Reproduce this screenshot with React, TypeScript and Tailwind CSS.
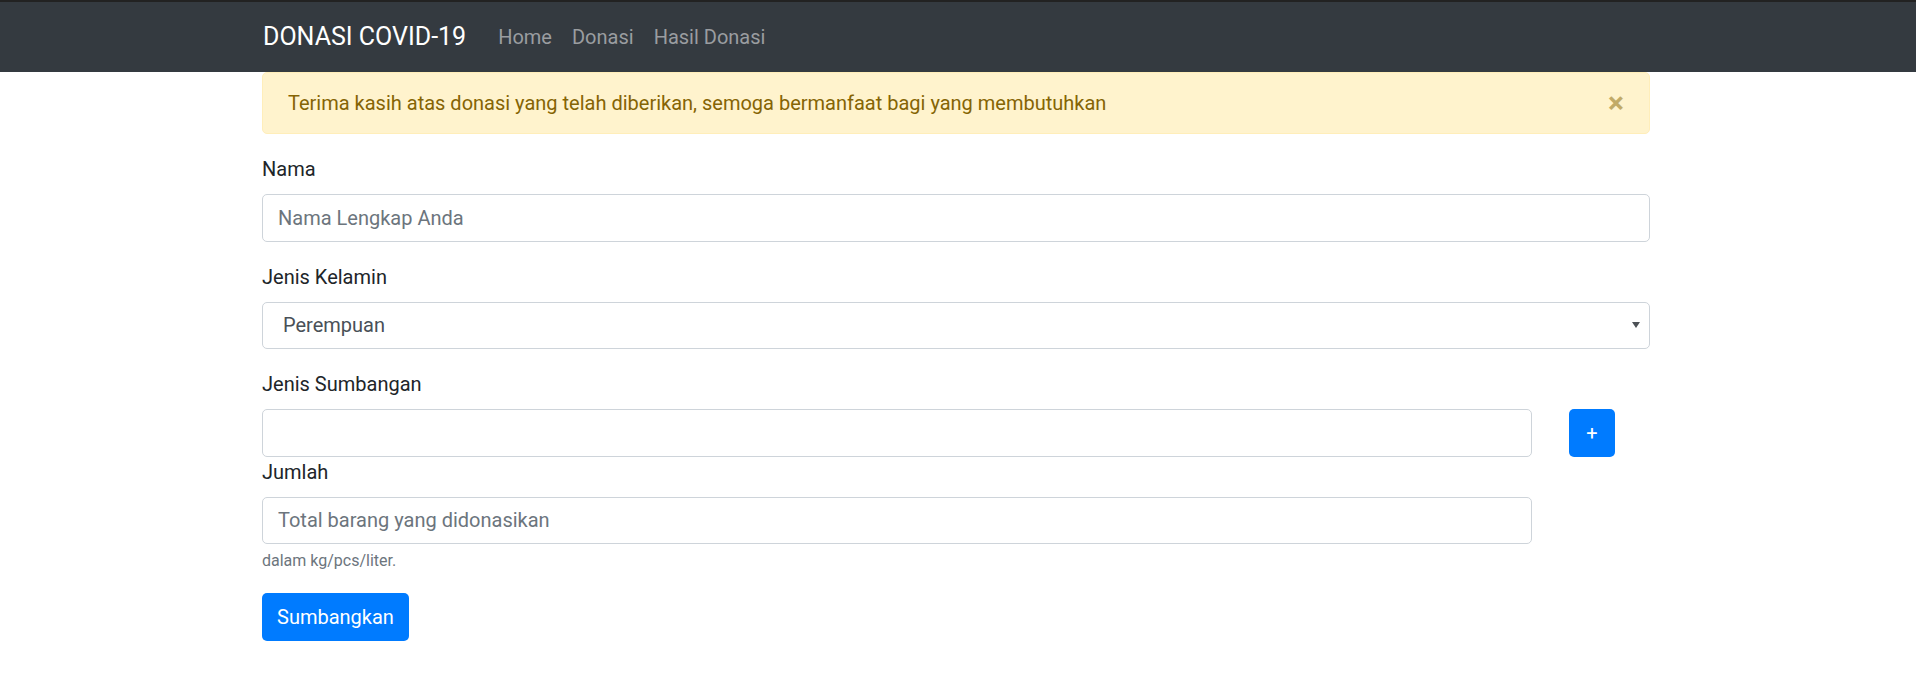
const FONT = "font-['Roboto','Liberation_Sans',sans-serif]";

export default function App() {
  return (
    <div className={`min-h-screen bg-white ${FONT}`}>
      {/* Navbar */}
      <nav className="border-t-2 border-[#222222] bg-[#343a40]">
        <div className="ml-[263px] flex h-[70px] w-[1388px] items-center">
          <a className="mr-[22px] text-[25px] text-white">DONASI COVID-19</a>
          <a className="px-[10px] text-[20px] text-[#9a9da0]">Home</a>
          <a className="px-[10px] text-[20px] text-[#9a9da0]">Donasi</a>
          <a className="px-[10px] text-[20px] text-[#9a9da0]">Hasil Donasi</a>
        </div>
      </nav>

      <div className="ml-[262px] w-[1388px] text-[20px] leading-[30px] text-[#212529]">
        {/* Alert */}
        <div className="relative mb-5 rounded-[5px] border border-[#ffeeba] bg-[#fff3cd] px-[25px] py-[15px] text-[#856404]">
          Terima kasih atas donasi yang telah diberikan, semoga bermanfaat bagi yang membutuhkan
          <button className="absolute right-0 top-0 px-[25px] py-[15px] text-[30px] font-bold leading-[30px] text-[#856404] opacity-50">
            ×
          </button>
        </div>

        {/* Nama */}
        <div className="mb-5">
          <label className="mb-[10px] block">Nama</label>
          <input
            className="block h-[47.5px] w-full rounded-[5px] border border-[#ced4da] px-[15px] text-[#495057] outline-none placeholder:text-[#6c757d]"
            placeholder="Nama Lengkap Anda"
          />
        </div>

        {/* Jenis Kelamin */}
        <div className="mb-5">
          <label className="mb-[10px] block">Jenis Kelamin</label>
          <div className="flex h-[47.5px] w-full items-center justify-between rounded-[5px] border border-[#ced4da] pl-[20px] pr-[9px] text-[#495057]">
            <span>Perempuan</span>
            <svg width="8" height="6" viewBox="0 0 8 6">
              <path d="M0 0h8L4 6z" fill="#4d5156" />
            </svg>
          </div>
        </div>

        {/* Jenis Sumbangan + Jumlah */}
        <div className="flex">
          <div className="w-[1270px]">
            <label className="mb-[10px] block">Jenis Sumbangan</label>
            <input className="block h-[47.5px] w-full rounded-[5px] border border-[#ced4da] px-[15px] text-[#495057] outline-none" />
            <label className="mb-[10px] block">Jumlah</label>
            <input
              className="block h-[47.5px] w-full rounded-[5px] border border-[#ced4da] px-[15px] text-[#495057] outline-none placeholder:text-[#6c757d]"
              placeholder="Total barang yang didonasikan"
            />
            <small className="mt-[5px] block text-[16px] leading-[24px] text-[#6c757d]">dalam kg/pcs/liter.</small>
          </div>
          <div className="ml-[37px] pt-[40px]">
            <button className="flex h-[47.5px] w-[46px] items-center justify-center rounded-[5px] bg-[#007bff] text-[20px] text-white">
              +
            </button>
          </div>
        </div>

        <button className="mt-5 h-[47.5px] rounded-[5px] bg-[#007bff] px-[15px] text-white">Sumbangkan</button>
      </div>
    </div>
  );
}
